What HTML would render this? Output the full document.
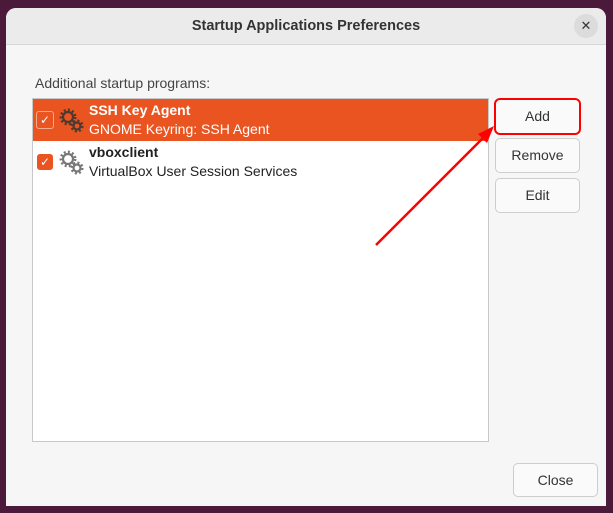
<!DOCTYPE html>
<html><head><style>
body{margin:0;width:613px;height:513px;background:#4b1a3a;font-family:"Liberation Sans",sans-serif;position:relative;overflow:hidden}
.win{position:absolute;left:6px;top:8px;width:600px;height:498px;background:#f6f6f6;border-radius:10px 10px 0 0;overflow:hidden}
.title{height:36px;border-bottom:1px solid #d6d6d6;background:#ebebeb;text-align:center;line-height:36px;font-weight:bold;font-size:14.5px;color:#333}
.x{position:absolute;right:8px;top:6px;width:24px;height:24px;border-radius:50%;background:#dcdcdc;text-align:center;line-height:24px;font-size:13px;color:#333}
.lbl{position:absolute;left:29px;top:67px;font-size:14px;color:#444}
.list{position:absolute;left:26px;top:90px;width:455px;height:342px;background:#fff;border:1px solid #c8c8c8}
.row{position:absolute;left:0;width:455px;height:42px}
.row .n{position:absolute;left:56px;top:3px;font-weight:bold;font-size:14px}
.row .d{position:absolute;left:56px;top:22px;font-size:14px}
.cb{position:absolute;left:4px;top:13px;width:16px;height:16px;border-radius:3px;background:#e95420;color:#fff;font-size:12px;text-align:center;line-height:16px}
.gear{position:absolute;left:26px;top:9px}
.btn{position:absolute;left:489px;width:83px;background:#fafafa;border:1px solid #cdcdcd;border-radius:5px;text-align:center;font-size:14px;color:#333}
</style></head><body>
<div class="win">
<div class="title">Startup Applications Preferences</div>
<div class="x">✕</div>
<div class="lbl">Additional startup programs:</div>
<div class="list">
 <div class="row" style="top:0;background:#e95420;color:#fff">
  <div class="cb" style="border:1px solid #f3a98a;left:3px;top:12px">✓</div>
  <svg class="gear" width="26" height="26" viewBox="0 0 26 26"><g fill="none" stroke="#4a3a30" stroke-width="2.2"><circle cx="9" cy="9" r="5"/><circle cx="18" cy="18" r="3.5"/></g><g stroke="#4a3a30" stroke-width="2.5" stroke-dasharray="2 2.2"><circle cx="9" cy="9" r="7.2" fill="none"/><circle cx="18" cy="18" r="5.3" fill="none"/></g></svg>
  <div class="n">SSH Key Agent</div><div class="d">GNOME Keyring: SSH Agent</div>
 </div>
 <div class="row" style="top:42px;color:#222">
  <div class="cb">✓</div>
  <svg class="gear" width="26" height="26" viewBox="0 0 26 26"><g fill="none" stroke="#777" stroke-width="2.2"><circle cx="9" cy="9" r="5"/><circle cx="18" cy="18" r="3.5"/></g><g stroke="#777" stroke-width="2.5" stroke-dasharray="2 2.2"><circle cx="9" cy="9" r="7.2" fill="none"/><circle cx="18" cy="18" r="5.3" fill="none"/></g></svg>
  <div class="n">vboxclient</div><div class="d">VirtualBox User Session Services</div>
 </div>
</div>
<div class="btn" style="top:90px;height:33px;line-height:33px;border:2px solid #f00;border-radius:6px;left:488px">Add</div>
<div class="btn" style="top:130px;height:33px;line-height:33px">Remove</div>
<div class="btn" style="top:170px;height:33px;line-height:33px">Edit</div>
<div class="btn" style="left:507px;top:455px;height:32px;line-height:32px">Close</div>
</div>
<svg style="position:absolute;left:0;top:0" width="613" height="513"><line x1="376" y1="245" x2="484" y2="137" stroke="#f00" stroke-width="2.5"/><polygon points="494,126 478,134 487,143" fill="#f00"/></svg>
</body></html>
